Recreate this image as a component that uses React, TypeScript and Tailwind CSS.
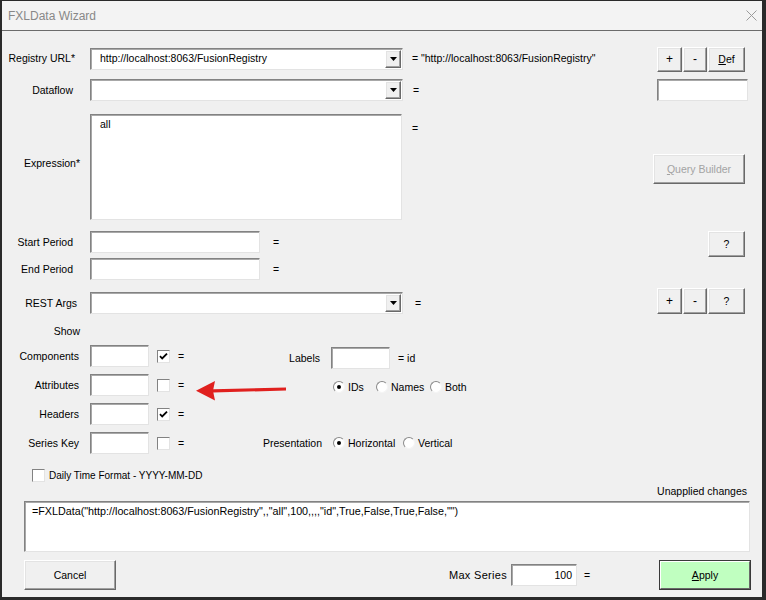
import type { ReactNode } from 'react'

const sunken =
  'bg-white border border-t-[#828282] border-l-[#828282] border-b-[#e3e3e3] border-r-[#e3e3e3] shadow-[inset_1px_1px_0_#a8a8a8]'
const raised =
  'bg-[#f0f0f0] border border-t-white border-l-white border-b-[#696969] border-r-[#696969] shadow-[inset_-1px_-1px_0_#a0a0a0,inset_1px_1px_0_#e3e3e3]'

const Label = ({ children, pr, className = '' }: { children: ReactNode; pr: string; className?: string }) => (
  <div className={`w-[88px] shrink-0 text-right ${pr} ${className}`}>{children}</div>
)

const Btn = ({ children, className = '' }: { children: ReactNode; className?: string }) => (
  <div className={`${raised} flex shrink-0 items-center justify-center ${className}`}>{children}</div>
)

const Combo = ({ value = '' }: { value?: string }) => (
  <div className={`${sunken} flex h-[22px] w-[313px] shrink-0 items-stretch`}>
    <div className="flex flex-1 items-center pb-[2px] pl-[9px]">{value}</div>
    <div className={`${raised} my-[1px] mr-[1px] flex w-[16px] items-center justify-center`}>
      <svg width="7" height="4" viewBox="0 0 7 4">
        <path d="M0 0h7L3.5 4z" fill="#000" />
      </svg>
    </div>
  </div>
)

const TextBox = ({ className = '' }: { className?: string }) => (
  <div className={`${sunken} h-[22px] shrink-0 ${className}`} />
)

const Check = ({ checked, className = '' }: { checked?: boolean; className?: string }) => (
  <div
    className={`flex h-[13px] w-[13px] shrink-0 items-center justify-center border border-t-[#828282] border-l-[#828282] border-b-[#e3e3e3] border-r-[#e3e3e3] bg-white ${className}`}
  >
    {checked && (
      <svg width="11" height="11" viewBox="0 0 11 11">
        <path d="M2 5.2l2.2 2.3L9 2.6" fill="none" stroke="#000" strokeWidth="1.8" />
      </svg>
    )}
  </div>
)

const Radio = ({ on, label, className = '' }: { on?: boolean; label: string; className?: string }) => (
  <div className={`flex shrink-0 items-center ${className}`}>
    <div className="flex h-[12px] w-[12px] items-center justify-center rounded-full border border-t-[#8a8a8a] border-l-[#8a8a8a] border-b-[#f4f4f4] border-r-[#f4f4f4] bg-white">
      {on && <div className="h-[4px] w-[4px] rounded-full bg-black" />}
    </div>
    <span className="ml-[3px]">{label}</span>
  </div>
)

const Eq = ({ children = '=', className = '' }: { children?: ReactNode; className?: string }) => (
  <span className={`shrink-0 ${className}`}>{children}</span>
)

export default function App() {
  return (
    <div className="h-[600px] w-[766px] overflow-hidden border-t border-r-4 border-b-[3px] border-l-2 border-[#2a2a2a] bg-[#f0f0f0] font-['Liberation_Sans',Arial,sans-serif] text-[10.5px] leading-[14px] text-black">
      {/* title bar */}
      <div className="flex h-[30px] items-center justify-between border-b border-[#6b6b6b] bg-[#f3f3f3] pr-[5px] pl-[6px]">
        <span className="text-[12px] text-[#888]">FXLData Wizard</span>
        <svg width="11" height="11" viewBox="0 0 11 11">
          <path d="M0.5 0.5l10 10M10.5 0.5l-10 10" stroke="#9a9a9a" strokeWidth="1" />
        </svg>
      </div>

      <div className="flex flex-col pr-[17px]">
        {/* Registry URL */}
        <div className="mt-[15px] flex h-[26px] items-center">
          <Label pr="pr-[15px]" className="mb-[3px]">
            Registry URL*
          </Label>
          <Combo value="http://localhost:8063/FusionRegistry" />
          <Eq className="mb-[3px] ml-[9px]">{'= "http://localhost:8063/FusionRegistry"'}</Eq>
          <div className="ml-auto flex">
            <Btn className="h-[25px] w-[25px] text-[12px]">+</Btn>
            <Btn className="ml-[1px] h-[25px] w-[24px] text-[12px]">-</Btn>
            <Btn className="ml-[1px] h-[25px] w-[37px]">
              <span>
                <u>D</u>ef
              </span>
            </Btn>
          </div>
        </div>

        {/* Dataflow */}
        <div className="mt-[7px] flex h-[22px] items-center">
          <Label pr="pr-[17px]">Dataflow</Label>
          <Combo />
          <Eq className="ml-[10px]" />
          <TextBox className="mr-[-3px] ml-auto w-[91px]" />
        </div>

        {/* Expression */}
        <div className="mt-[13px] flex h-[106px] items-start">
          <Label pr="pr-[10px]" className="mt-[42px]">
            Expression*
          </Label>
          <div className={`${sunken} h-[106px] w-[312px] shrink-0 pt-[2px] pl-[9px]`}>all</div>
          <Eq className="mt-[7px] ml-[10px]" />
          <Btn className="mt-[40px] ml-auto h-[30px] w-[92px] text-[#a3a3a3]">
            <span>
              <u>Q</u>uery Builder
            </span>
          </Btn>
        </div>

        {/* Start Period */}
        <div className="mt-[11px] flex h-[22px] items-start">
          <Label pr="pr-[17px]" className="self-center">
            Start Period
          </Label>
          <TextBox className="w-[170px]" />
          <Eq className="ml-[13px] self-center" />
          <Btn className="ml-auto h-[26px] w-[37px]">?</Btn>
        </div>

        {/* End Period */}
        <div className="mt-[5px] flex h-[22px] items-center">
          <Label pr="pr-[17px]">End Period</Label>
          <TextBox className="w-[170px]" />
          <Eq className="ml-[13px]" />
        </div>

        {/* REST Args */}
        <div className="mt-[8px] flex h-[26px] items-end">
          <Label pr="pr-[13px]" className="flex h-[22px] items-center justify-end">
            REST Args
          </Label>
          <Combo />
          <Eq className="mb-[4px] ml-[12px]" />
          <div className="ml-auto flex">
            <Btn className="h-[26px] w-[25px] text-[12px]">+</Btn>
            <Btn className="ml-[1px] h-[26px] w-[24px] text-[12px]">-</Btn>
            <Btn className="ml-[1px] h-[26px] w-[37px]">?</Btn>
          </div>
        </div>

        {/* Show */}
        <div className="mt-[10px] flex h-[14px] items-center">
          <Label pr="pr-[10px]">Show</Label>
        </div>

        {/* Components */}
        <div className="mt-[7px] flex h-[22px] items-center">
          <Label pr="pr-[11px]">Components</Label>
          <TextBox className="w-[59px]" />
          <Check checked className="ml-[8px]" />
          <Eq className="ml-[8px] w-[10px]" />
          <div className="mt-[4px] flex items-center">
            <span className="w-[132px] text-right">Labels</span>
            <TextBox className="ml-[11px] w-[59px]" />
            <Eq className="ml-[8px]">= id</Eq>
          </div>
        </div>

        {/* Attributes */}
        <div className="mt-[7px] flex h-[22px] items-center">
          <Label pr="pr-[11px]">Attributes</Label>
          <TextBox className="w-[59px]" />
          <Check className="ml-[8px]" />
          <Eq className="ml-[8px] w-[10px]" />
          <svg className="ml-[8px] shrink-0 overflow-visible" width="91" height="22" viewBox="0 0 91 22">
            <path d="M17 15.2L90 13.4L90 16.6L17 18.4z" fill="#e0201e" />
            <path d="M0 16.8L19 7L17 16.8L19 26.6z" fill="#e0201e" />
          </svg>
          <div className="mt-[4px] flex items-center">
            <Radio on label="IDs" className="ml-[46px] w-[43px]" />
            <Radio label="Names" className="w-[54px]" />
            <Radio label="Both" />
          </div>
        </div>

        {/* Headers */}
        <div className="mt-[7px] flex h-[22px] items-center">
          <Label pr="pr-[11px]">Headers</Label>
          <TextBox className="w-[59px]" />
          <Check checked className="ml-[8px]" />
          <Eq className="ml-[8px] w-[10px]" />
        </div>

        {/* Series Key */}
        <div className="mt-[7px] flex h-[22px] items-center">
          <Label pr="pr-[11px]">Series Key</Label>
          <TextBox className="w-[59px]" />
          <Check className="ml-[8px]" />
          <Eq className="ml-[8px] w-[10px]" />
          <span className="w-[134px] shrink-0 text-right">Presentation</span>
          <Radio on label="Horizontal" className="ml-[11px] w-[70px]" />
          <Radio label="Vertical" />
        </div>

        {/* Daily time format */}
        <div className="mt-[14px] flex h-[14px] items-center">
          <Check className="ml-[30px]" />
          <span className="mt-[2px] ml-[4px] text-[10px]">Daily Time Format - YYYY-MM-DD</span>
        </div>

        {/* Unapplied */}
        <div className="mt-[2px] mr-[-2px] flex h-[14px] items-center justify-end">Unapplied changes</div>

        {/* Formula */}
        <div className={`${sunken} mt-[3px] ml-[22px] h-[51px] w-[726px] pt-[2px] pl-[7px] text-[10.75px]`}>
          {'=FXLData("http://localhost:8063/FusionRegistry",,"all",100,,,,"id",True,False,True,False,"")'}
        </div>

        {/* Bottom */}
        <div className="mt-[8px] flex h-[30px] items-center">
          <Btn className="ml-[22px] h-[30px] w-[92px]">Cancel</Btn>
          <span className="w-[391px] shrink-0 text-right text-[11px] tracking-[0.3px]">Max Series</span>
          <div className={`${sunken} ml-[4px] flex h-[22px] w-[66px] shrink-0 items-center justify-end pr-[4px]`}>100</div>
          <Eq className="ml-[7px]" />
          <div className="mr-[-6px] ml-auto h-[30px] w-[92px] border border-[#3a3a3a]">
            <div className="flex h-full w-full items-center justify-center border border-t-white border-l-white border-b-[#696969] border-r-[#696969] bg-[#c0ffc0]">
              <span>
                <u>A</u>pply
              </span>
            </div>
          </div>
        </div>
      </div>
    </div>
  )
}
